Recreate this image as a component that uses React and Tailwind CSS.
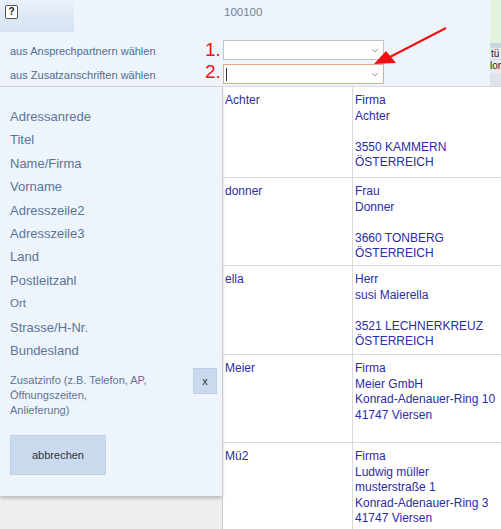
import React from "react";

const labels = [
  "Adressanrede",
  "Titel",
  "Name/Firma",
  "Vorname",
  "Adresszeile2",
  "Adresszeile3",
  "Land",
  "Postleitzahl",
  "Ort",
  "Strasse/H-Nr.",
  "Bundesland",
];

const rows = [
  { key: "Achter", lines: ["Firma", "Achter", "", "3550 KAMMERN", "ÖSTERREICH"], h: "h-[91px]" },
  { key: "donner", lines: ["Frau", "Donner", "", "3660 TONBERG", "ÖSTERREICH"], h: "h-[88px]" },
  { key: "ella", lines: ["Herr", "susi Maierella", "", "3521 LECHNERKREUZ", "ÖSTERREICH"], h: "h-[89px]" },
  { key: "Meier", lines: ["Firma", "Meier GmbH", "Konrad-Adenauer-Ring 10", "41747 Viersen"], h: "h-[88px]" },
  {
    key: "Mü2",
    lines: ["Firma", "Ludwig müller", "musterstraße 1", "Konrad-Adenauer-Ring 3", "41747 Viersen"],
    h: "h-[95px]",
  },
];

function Select({ active }) {
  return (
    <div
      className={`flex h-[20px] w-[161px] items-center justify-end border bg-white pr-[4px] ${
        active ? "border-[#e8a68c]" : "border-[#c4c4c4]"
      }`}
    >
      {active && <span className="mr-auto ml-[2px] h-[13px] w-px bg-[#333]" />}
      <svg width="8" height="5" viewBox="0 0 8 5">
        <path d="M1 1l3 3 3-3" fill="none" stroke="#9a9a9a" strokeWidth="1" />
      </svg>
    </div>
  );
}

export default function App() {
  return (
    <div className="relative h-[529px] w-[501px] overflow-hidden bg-white font-['Liberation_Sans',Arial,sans-serif]">
      {/* top band */}
      <div className="flex h-[86px]">
        <div className="relative flex w-[490px] bg-[#eef4fc]">
          <div className="w-[223px] shrink-0">
            <div className="flex h-[32px] w-[74px] items-start bg-gradient-to-b from-[#e9f0f9] to-[#d4e2f2] pl-[5px] pt-[5px]">
              <div className="flex h-[14px] w-[13px] items-center justify-center rounded-[2px] border border-[#555] bg-white text-[10px] font-bold leading-none text-[#222]">
                ?
              </div>
            </div>
            <div className="mt-[7px] pl-[10px] text-[11px] leading-[24px] text-[#4f6d8e]">
              <div>aus Ansprechpartnern wählen</div>
              <div>aus Zusatzanschriften wählen</div>
            </div>
          </div>
          <div className="flex flex-col">
            <div className="pl-px pt-[5px] text-[11.5px] leading-[14px] text-[#6f8299]">100100</div>
            <div className="mt-[21px] flex flex-col gap-[4px]">
              <Select />
              <Select active />
            </div>
          </div>
        </div>
        <div className="flex w-[11px] flex-col">
          <div className="h-[43px] bg-[#e4f3df]" />
          <div className="h-[5px] bg-[#c9d5e3]" />
          <div className="h-[12px] overflow-hidden border-b border-[#d6dbe2] bg-[#e9edf1] pl-px text-[10px] leading-[12px] text-[#222]">
            tü
          </div>
          <div className="h-[13px] overflow-hidden bg-[#e9edf1] text-[10px] leading-[12px] text-[#222]">lor</div>
          <div className="flex-1 bg-[#dfe4ea]" />
        </div>
      </div>

      {/* lower part */}
      <div className="flex border-t border-[#d9d9d9]">
        <div className="w-[222px] shrink-0 bg-[#efefef]">
          <div className="h-[409px] bg-[#eef4fc] pl-[10px] pt-[18px] shadow-[0_2px_4px_rgba(0,0,0,0.25)]">
            {labels.map((l) => (
              <div
                key={l}
                className={`h-[23.4px] leading-[23.4px] text-[#5b7595] ${l === "Ort" ? "text-[11.5px]" : "text-[13px]"}`}
              >
                {l}
              </div>
            ))}
            <div className="mt-[11px] flex items-start pr-[5px]">
              <div className="text-[11px] leading-[15px] text-[#5b7595]">
                Zusatzinfo (z.B. Telefon, AP,
                <br />
                Öffnungszeiten,
                <br />
                Anlieferung)
              </div>
              <div className="ml-auto -mt-[5px] flex h-[26px] w-[24px] items-center justify-center border border-[#bfd0e6] bg-[#c9d9ee] text-[11px] text-[#333]">
                x
              </div>
            </div>
            <div className="mt-[17px] flex h-[40px] w-[96px] items-center justify-center border border-[#bfd0e6] bg-[#c9d9ee] text-[11px] text-[#333]">
              abbrechen
            </div>
          </div>
        </div>
        <div className="flex-1 border-l border-[#c8c8c8]">
          {rows.map((r) => (
            <div key={r.key} className={`flex border-b border-[#d9d9d9] ${r.h}`}>
              <div className="w-[130px] shrink-0 border-r border-[#d9d9d9] pl-[2px] pt-[6px] text-[12px] leading-[15.5px] text-[#2c2ca6]">
                {r.key}
              </div>
              <div className="pl-[2px] pt-[6px] text-[12px] leading-[15.5px] text-[#2c2ca6]">
                {r.lines.map((t, i) => (
                  <div key={i} className="h-[15.5px] whitespace-nowrap">
                    {t}
                  </div>
                ))}
              </div>
            </div>
          ))}
        </div>
      </div>

      {/* red annotations */}
      <div className="absolute left-[205px] top-[39px] text-[19px] leading-[22px] text-[#f01010]">1.</div>
      <div className="absolute left-[205px] top-[61px] text-[19px] leading-[22px] text-[#f01010]">2.</div>
      <svg className="absolute left-0 top-0" width="501" height="529" viewBox="0 0 501 529">
        <line x1="446" y1="28" x2="388" y2="58" stroke="#f01010" strokeWidth="2" />
        <path d="M374 64 L386 51 L396 63 Z" fill="#f01010" />
      </svg>
    </div>
  );
}
